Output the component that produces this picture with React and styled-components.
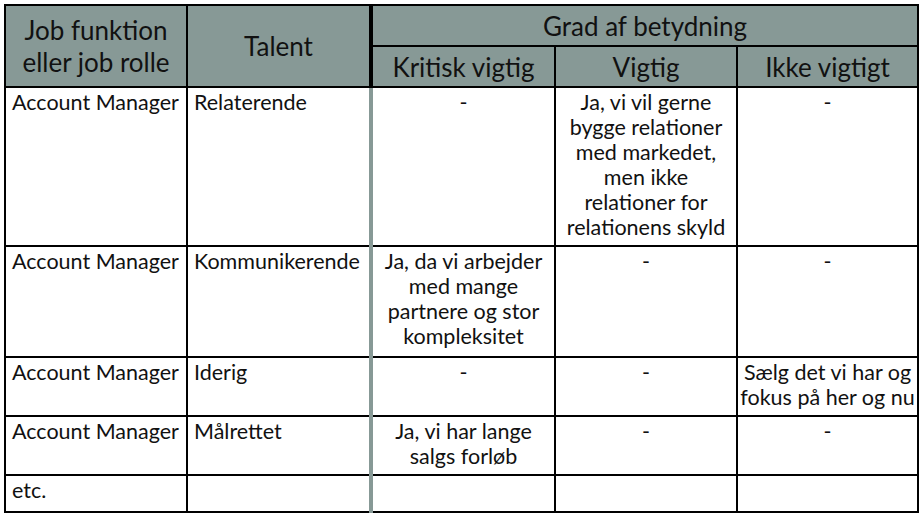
import styled, { createGlobalStyle } from 'styled-components';

const GlobalStyle = createGlobalStyle`
  html, body {
    margin: 0;
    background: #fff;
  }
`;

const columns = [182, 184, 184, 182, 181];

const rows = [
  {
    role: 'Account Manager',
    talent: 'Relaterende',
    height: 159,
    values: [
      '-',
      'Ja, vi vil gerne\nbygge relationer\nmed markedet,\nmen ikke\nrelationer for\nrelationens skyld',
      '-',
    ],
  },
  {
    role: 'Account Manager',
    talent: 'Kommunikerende',
    height: 111,
    values: ['Ja, da vi arbejder\nmed mange\npartnere og stor\nkompleksitet', '-', '-'],
  },
  {
    role: 'Account Manager',
    talent: 'Iderig',
    height: 59,
    values: ['-', '-', 'Sælg det vi har og\nfokus på her og nu'],
  },
  {
    role: 'Account Manager',
    talent: 'Målrettet',
    height: 59,
    values: ['Ja, vi har lange\nsalgs forløb', '-', '-'],
  },
  { role: 'etc.', talent: '', height: 37, values: ['', '', ''] },
];

export default function App() {
  return (
    <>
      <GlobalStyle />
      <Page>
        <Table>
          <colgroup>
            {columns.map((w, i) => (
              <Col key={i} $width={w} />
            ))}
          </colgroup>
          <thead>
            <tr>
              <Head rowSpan={2}>
                Job funktion
                <br />
                eller job rolle
              </Head>
              <Head rowSpan={2} $divider>
                Talent
              </Head>
              <Head colSpan={3}>Grad af betydning</Head>
            </tr>
            <tr>
              <Head>Kritisk vigtig</Head>
              <Head>Vigtig</Head>
              <Head>Ikke vigtigt</Head>
            </tr>
          </thead>
          <tbody>
            {rows.map((row, i) => (
              <Row key={i} $height={row.height}>
                <Cell>{row.role}</Cell>
                <Cell $divider>{row.talent}</Cell>
                {row.values.map((v, j) => (
                  <Cell key={j} $center>
                    {v}
                  </Cell>
                ))}
              </Row>
            ))}
          </tbody>
        </Table>
      </Page>
    </>
  );
}

const Page = styled.div`
  padding: 4px 0 0 4px;
  font-family: Lato, 'Open Sans', sans-serif;
  color: #111;
`;

const Table = styled.table`
  border-collapse: collapse;
  table-layout: fixed;
  width: 913px;
  border: 2px solid #000;
`;

const Col = styled.col`
  width: ${(p) => p.$width}px;
`;

const Row = styled.tr`
  height: ${(p) => p.$height}px;
`;

const Head = styled.th`
  background: #879996;
  font-weight: 400;
  font-size: 26px;
  line-height: 32px;
  height: 39px;
  padding: 0 2px;
  text-align: center;
  vertical-align: middle;
  border: 2px solid #000;
  border-right: ${(p) => (p.$divider ? '4px solid #000' : '2px solid #000')};
`;

const Cell = styled.td`
  font-size: 21.5px;
  line-height: 25px;
  padding: ${(p) => (p.$center ? '2px 1px 0' : '2px 4px 0 6px')};
  vertical-align: top;
  text-align: ${(p) => (p.$center ? 'center' : 'left')};
  white-space: pre-line;
  border: 2px solid #000;
  border-right: ${(p) => (p.$divider ? '4px solid #879996' : '2px solid #000')};
`;
